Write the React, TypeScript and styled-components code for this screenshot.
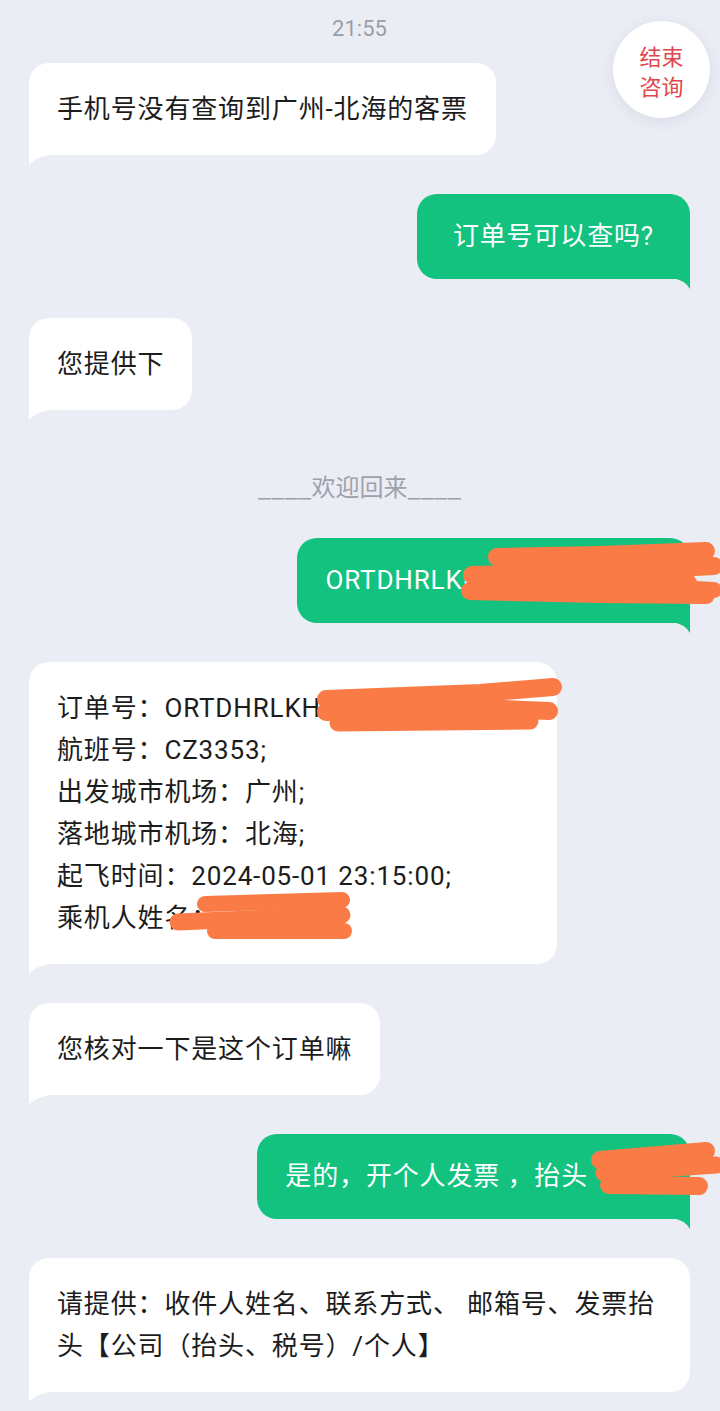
import React from "react";
import styled, { createGlobalStyle, css } from "styled-components";

const GlobalStyle = createGlobalStyle`
  html, body {
    margin: 0;
    padding: 0;
    background: #ebedf5;
  }
  body {
    overflow-x: hidden;
    font-family: Roboto, "Noto Sans CJK SC", sans-serif;
    -webkit-font-smoothing: antialiased;
  }
`;

const Page = styled.div`
  position: relative;
  min-height: 1411px;
  box-sizing: border-box;
  padding: 14px 30px 0 29px;
  display: flex;
  flex-direction: column;
  gap: 39px;
`;

const Time = styled.div`
  align-self: center;
  font-size: 22px;
  line-height: 30px;
  color: #9b9da5;
  margin-bottom: -20px;
`;

const EndButton = styled.div`
  position: absolute;
  top: 21px;
  right: 10px;
  width: 97px;
  height: 97px;
  border-radius: 50%;
  background: #fff;
  box-shadow: 0 3px 14px rgba(60, 70, 110, 0.1);
  display: flex;
  flex-direction: column;
  align-items: center;
  justify-content: center;
  color: #e1454d;
  font-family: "Noto Sans CJK SC", sans-serif;
  font-size: 22px;
  line-height: 30px;
  z-index: 2;
`;

const Divider = styled.div`
  align-self: center;
  margin: 21px 0 -3px;
  font-family: "Noto Sans CJK SC", sans-serif;
  font-size: 24px;
  line-height: 32px;
  color: #9ea1aa;
`;

type Side = "left" | "right";

const Bubble = styled.div<{ $side: Side; $padX?: number }>`
  position: relative;
  box-sizing: border-box;
  max-width: 100%;
  font-size: 26px;
  line-height: 42px;
  letter-spacing: 0.85px;
  ${({ $side, $padX = 28 }) =>
    $side === "left"
      ? css`
          align-self: flex-start;
          padding: 25px 28px;
          background: #ffffff;
          color: #1c1c1c;
          border-radius: 20px 20px 20px 0;
          &::after {
            content: "";
            position: absolute;
            left: 0;
            bottom: -10px;
            width: 28px;
            height: 11px;
            background: #ffffff;
            clip-path: path("M0 0 H28 Q7 2 0 11 Z");
          }
        `
      : css`
          align-self: flex-end;
          padding: 21px ${$padX}px 22px;
          background: #13c27f;
          color: #ffffff;
          border-radius: 20px 20px 0 20px;
          &::after {
            content: "";
            position: absolute;
            right: 0;
            bottom: -10px;
            width: 18px;
            height: 11px;
            background: #13c27f;
            clip-path: path("M0 0 H18 V11 Q13 2 0 0 Z");
          }
        `}
`;

const Line = styled.div`
  white-space: nowrap;
`;

const Hidden = styled.span<{ $w: number }>`
  display: inline-block;
  width: ${({ $w }) => $w}px;
  height: 1px;
`;

const Scribble = styled.svg<{ $left?: number; $right?: number; $top: number }>`
  position: absolute;
  top: ${({ $top }) => $top}px;
  ${({ $left }) => ($left !== undefined ? `left: ${$left}px;` : "")}
  ${({ $right }) => ($right !== undefined ? `right: ${$right}px;` : "")}
  overflow: visible;
  pointer-events: none;
  z-index: 1;

  path {
    fill: none;
    stroke: #fa7b45;
    stroke-linecap: round;
    stroke-linejoin: round;
  }
`;

export default function App() {
  return (
    <>
      <GlobalStyle />
      <Page>
        <Time>21:55</Time>
        <EndButton>
          <span>结束</span>
          <span>咨询</span>
        </EndButton>

        <Bubble $side="left">手机号没有查询到广州-北海的客票</Bubble>

        <Bubble $side="right" $padX={36}>
          订单号可以查吗?
        </Bubble>

        <Bubble $side="left">您提供下</Bubble>

        <Divider>____欢迎回来____</Divider>

        <Bubble $side="right">
          ORTDHRLKH
          <Hidden $w={180} aria-hidden="true" />
          <Scribble $right={-30} $top={5} width={262} height={64} viewBox="0 0 262 64">
            <path d="M39 14 L142 12 L248 8" strokeWidth={18} />
            <path d="M14 32 L142 29 L256 23" strokeWidth={18} />
            <path d="M12 48 L142 51 L248 52" strokeWidth={18} />
            <path d="M182 43 L256 47" strokeWidth={16} />
            <path d="M30 40 L230 40" strokeWidth={18} />
          </Scribble>
        </Bubble>

        <Bubble $side="left">
          <Line>
            订单号：ORTDHRLKH
            <Hidden $w={208} aria-hidden="true" />
          </Line>
          <Line>航班号：CZ3353;</Line>
          <Line>出发城市机场：广州;</Line>
          <Line>落地城市机场：北海;</Line>
          <Line>起飞时间：2024-05-01 23:15:00;</Line>
          <Line>
            乘机人姓名：
            <Hidden $w={80} aria-hidden="true" />
          </Line>
          <Scribble $left={281} $top={16} width={260} height={62} viewBox="0 0 260 62">
            <path d="M16 21 L170 15 L243 9" strokeWidth={18} />
            <path d="M16 34 L170 30 L239 33" strokeWidth={18} />
            <path d="M28 45 L220 43" strokeWidth={17} />
          </Scribble>
          <Scribble $left={131} $top={228} width={200} height={55} viewBox="0 0 200 55">
            <path d="M45 14 L182 10" strokeWidth={16} />
            <path d="M18 32 L182 25" strokeWidth={17} />
            <path d="M55 41 L184 41" strokeWidth={16} />
          </Scribble>
        </Bubble>

        <Bubble $side="left">您核对一下是这个订单嘛</Bubble>

        <Bubble $side="right">
          是的，开个人发票 ，抬头
          <Hidden $w={74} aria-hidden="true" />
          <Scribble $right={-30} $top={4} width={135} height={62} viewBox="0 0 135 62">
            <path d="M15 22 L121 13" strokeWidth={18} />
            <path d="M19 35 L75 31 L131 27" strokeWidth={17} />
            <path d="M24 47 L114 48" strokeWidth={18} />
          </Scribble>
        </Bubble>

        <Bubble $side="left">
          请提供：收件人姓名、联系方式、 邮箱号、发票抬头【公司（抬头、税号）/个人】
        </Bubble>
      </Page>
    </>
  );
}
